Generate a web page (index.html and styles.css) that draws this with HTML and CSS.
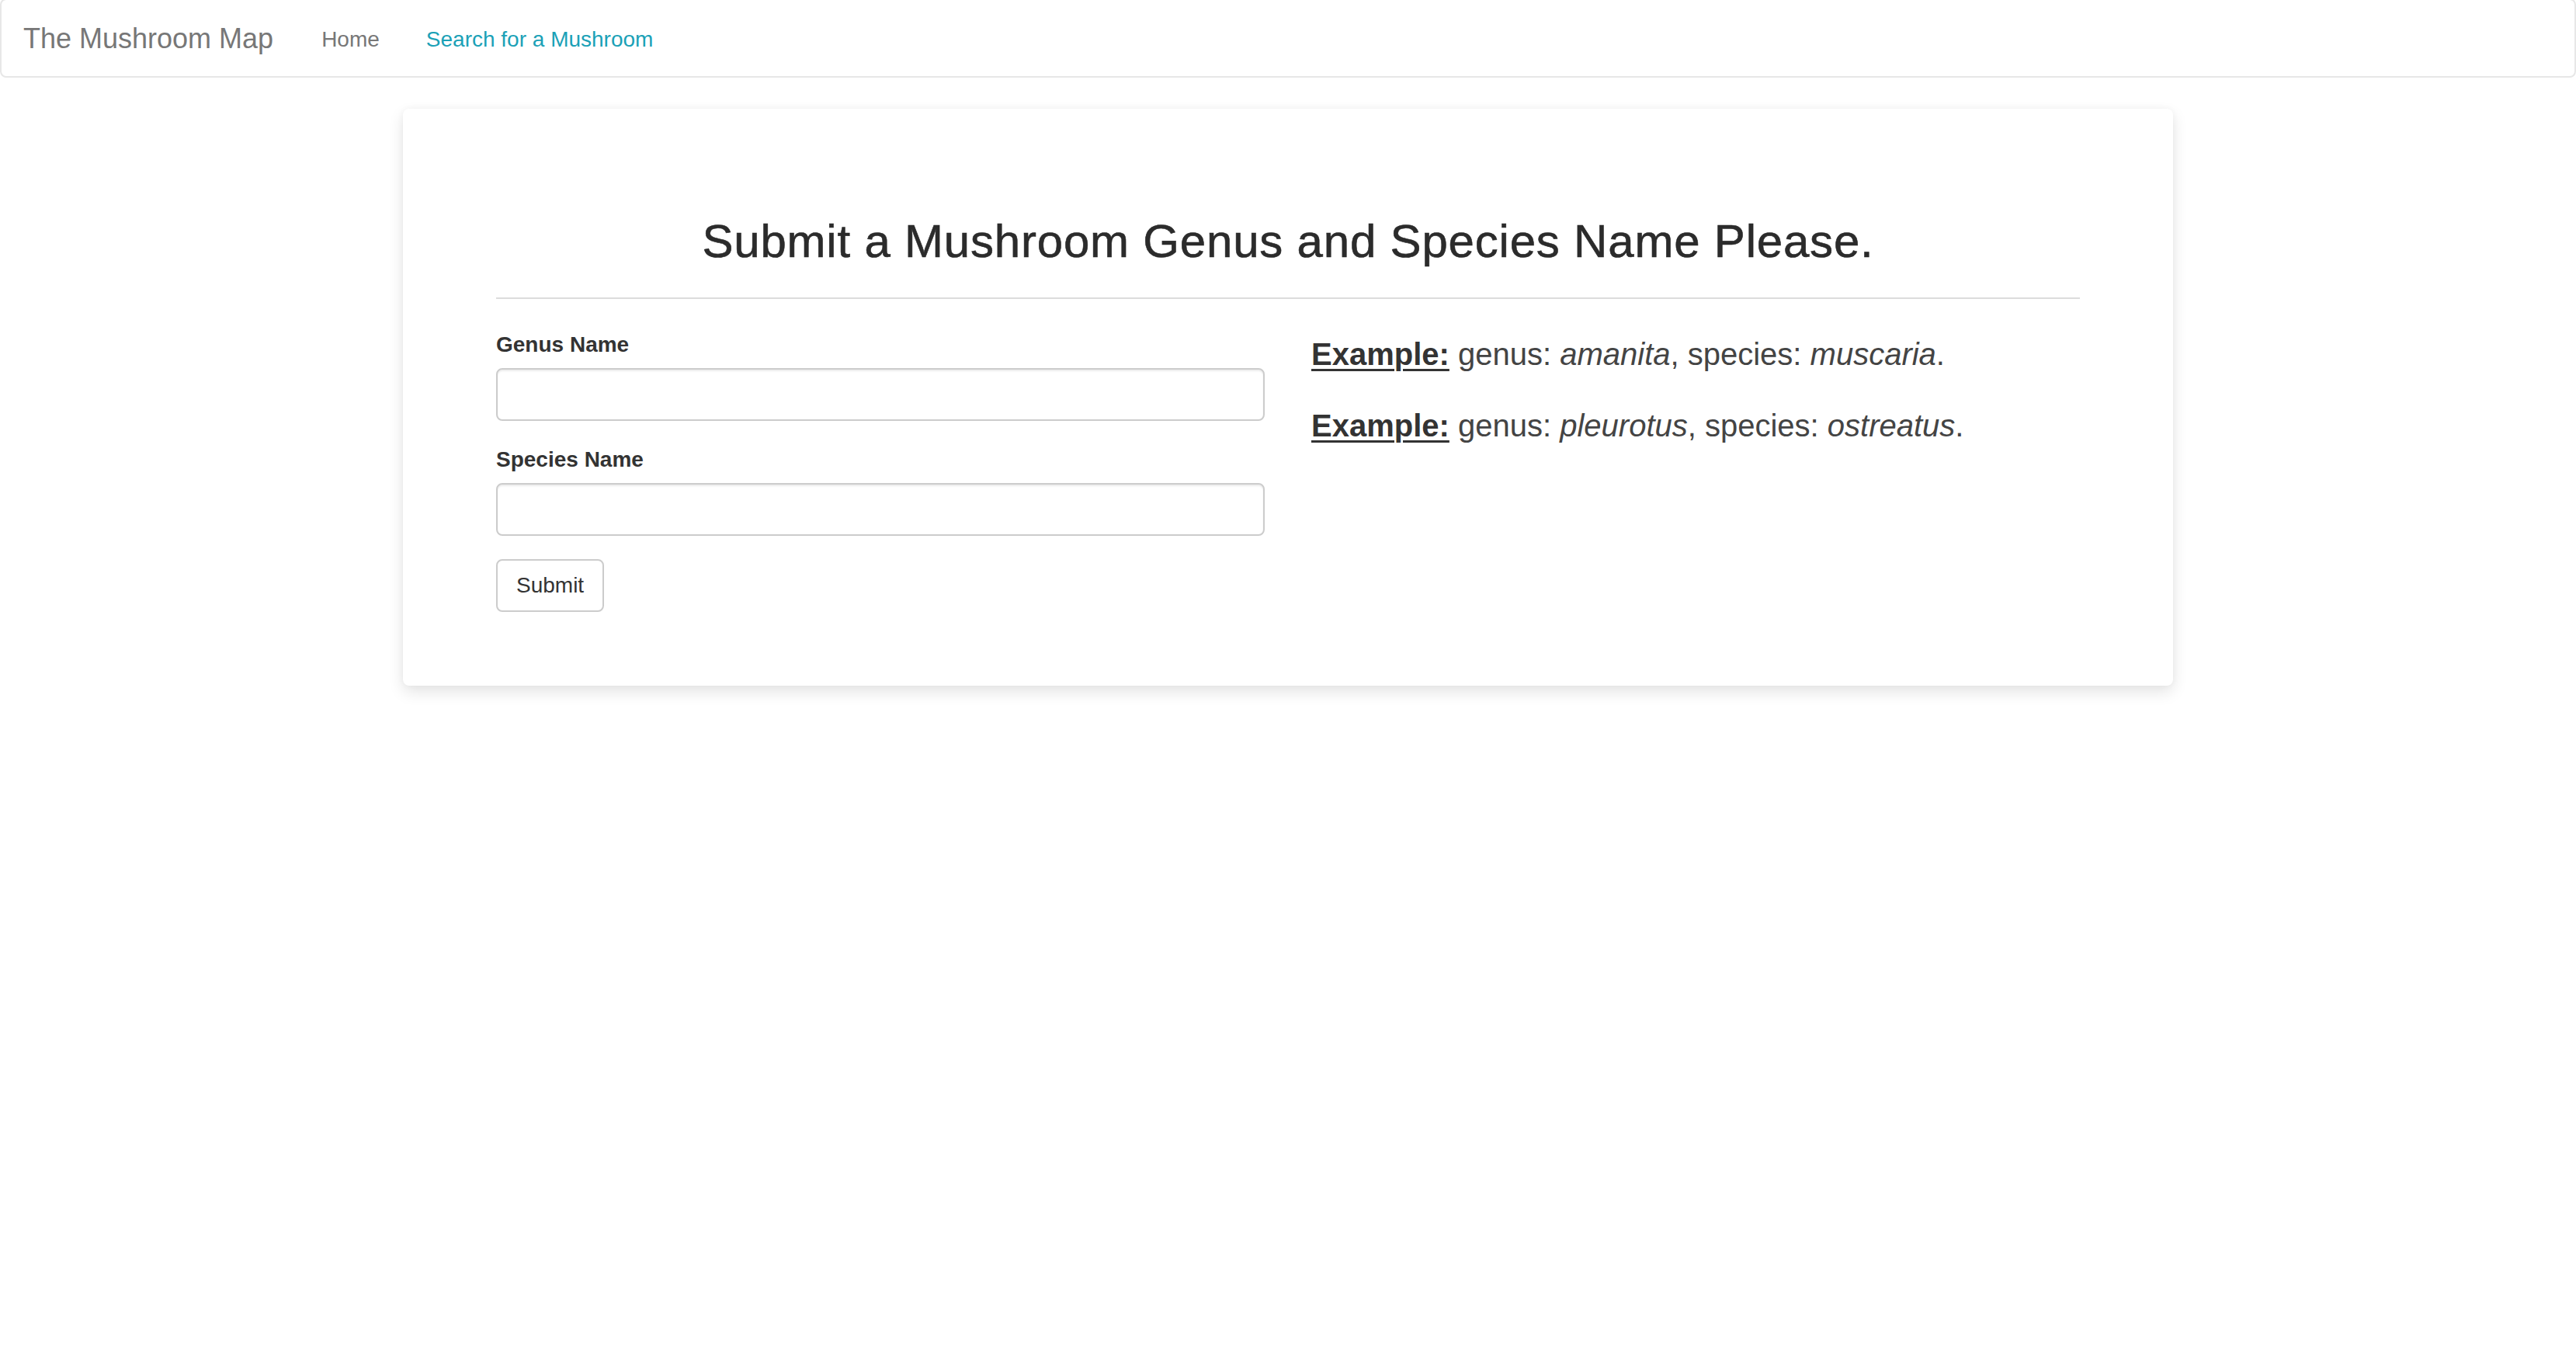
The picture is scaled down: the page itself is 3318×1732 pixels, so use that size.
FILE: index.html
```html
<!DOCTYPE html>
<html lang="en">
<head>
<meta charset="utf-8">
<title>The Mushroom Map</title>
<link rel="stylesheet" href="styles.css">
</head>
<body>
<nav class="navbar">
  <div class="nav-inner">
    <a class="brand" href="#">The Mushroom Map</a>
    <ul class="nav-links">
      <li><a href="#" class="nav-link">Home</a></li>
      <li><a href="#" class="nav-link active">Search for a Mushroom</a></li>
    </ul>
  </div>
</nav>
<main class="card">
  <h2 class="title">Submit a Mushroom Genus and Species Name Please.</h2>
  <hr class="divider">
  <div class="row">
    <form class="form-col">
      <div class="form-group">
        <label class="label" for="genus">Genus Name</label>
        <input class="input" id="genus" type="text">
      </div>
      <div class="form-group">
        <label class="label" for="species">Species Name</label>
        <input class="input" id="species" type="text">
      </div>
      <button class="btn" type="button">Submit</button>
    </form>
    <div class="examples">
      <p class="example"><span class="ex-label">Example:</span> genus: <em>amanita</em>, species: <em>muscaria</em>.</p>
      <p class="example"><span class="ex-label">Example:</span> genus: <em>pleurotus</em>, species: <em>ostreatus</em>.</p>
    </div>
  </div>
</main>
</body>
</html>
```
FILE: styles.css
```css
* { box-sizing: border-box; }
html, body {
  margin: 0;
  padding: 0;
  background: #fff;
}
body {
  min-height: 100vh;
  font-family: "Liberation Sans", Helvetica, Arial, sans-serif;
  color: #333;
  font-size: 28px;
  line-height: 40px;
}

/* Navbar */
.navbar {
  margin-top: -2px;
  border: 2px solid #e7e7e7;
  border-radius: 8px;
  background: #fff;
}
.nav-inner {
  display: flex;
  align-items: flex-start;
  height: 98px;
}
.brand {
  padding: 30px 32px 0 28px;
  font-size: 36px;
  line-height: 40px;
  color: #777;
  text-decoration: none;
}
.nav-links {
  display: flex;
  list-style: none;
  margin: 0;
  padding: 0;
}
.nav-link {
  display: block;
  padding: 31px 30px 0 30px;
  font-size: 28px;
  line-height: 40px;
  color: #777;
  text-decoration: none;
}
.nav-link.active {
  color: #1ba1b7;
}

/* Card */
.card {
  display: block;
  width: 2280px;
  margin: 40px auto 60px;
  padding: 138px 120px 95px;
  background: #fff;
  border-radius: 8px;
  box-shadow: 0 8px 20px rgba(0, 0, 0, 0.11), 0 0 8px rgba(0, 0, 0, 0.04);
}
.title {
  margin: 0;
  text-align: center;
  font-size: 60px;
  line-height: 66px;
  font-weight: normal;
  letter-spacing: 0.8px;
  color: #2b2b2b;
  -webkit-text-stroke: 0.6px #2b2b2b;
}
.divider {
  margin: 39px 0 39px;
  border: 0;
  border-top: 2px solid #dcdcdc;
  height: 0;
}
.row {
  display: grid;
  grid-template-columns: 990px 990px;
  column-gap: 60px;
  align-items: start;
}
.form-col {
  margin: 0;
}
.form-group {
  margin-bottom: 30px;
}
.label {
  display: block;
  margin-bottom: 10px;
  font-weight: bold;
  font-size: 28px;
  line-height: 40px;
  color: #333;
}
.input {
  display: block;
  width: 100%;
  height: 68px;
  padding: 12px 24px;
  font-family: inherit;
  font-size: 28px;
  color: #555;
  background: #fff;
  border: 2px solid #ccc;
  border-radius: 8px;
  box-shadow: inset 0 2px 2px rgba(0, 0, 0, 0.075);
  outline: none;
}
.btn {
  display: inline-block;
  height: 68px;
  padding: 12px 24px;
  font-family: inherit;
  font-size: 28px;
  line-height: 40px;
  color: #333;
  background: #fff;
  border: 2px solid #ccc;
  border-radius: 8px;
  cursor: pointer;
}

/* Examples */
.examples {
  padding-top: 4px;
}
.example {
  margin: 0 0 36px;
  font-size: 40px;
  line-height: 56px;
  color: #444;
}
.ex-label {
  font-weight: bold;
  color: #333;
  text-decoration: underline;
  text-decoration-thickness: 3px;
  text-underline-offset: 5px;
}
.example em {
  font-style: italic;
}
```
